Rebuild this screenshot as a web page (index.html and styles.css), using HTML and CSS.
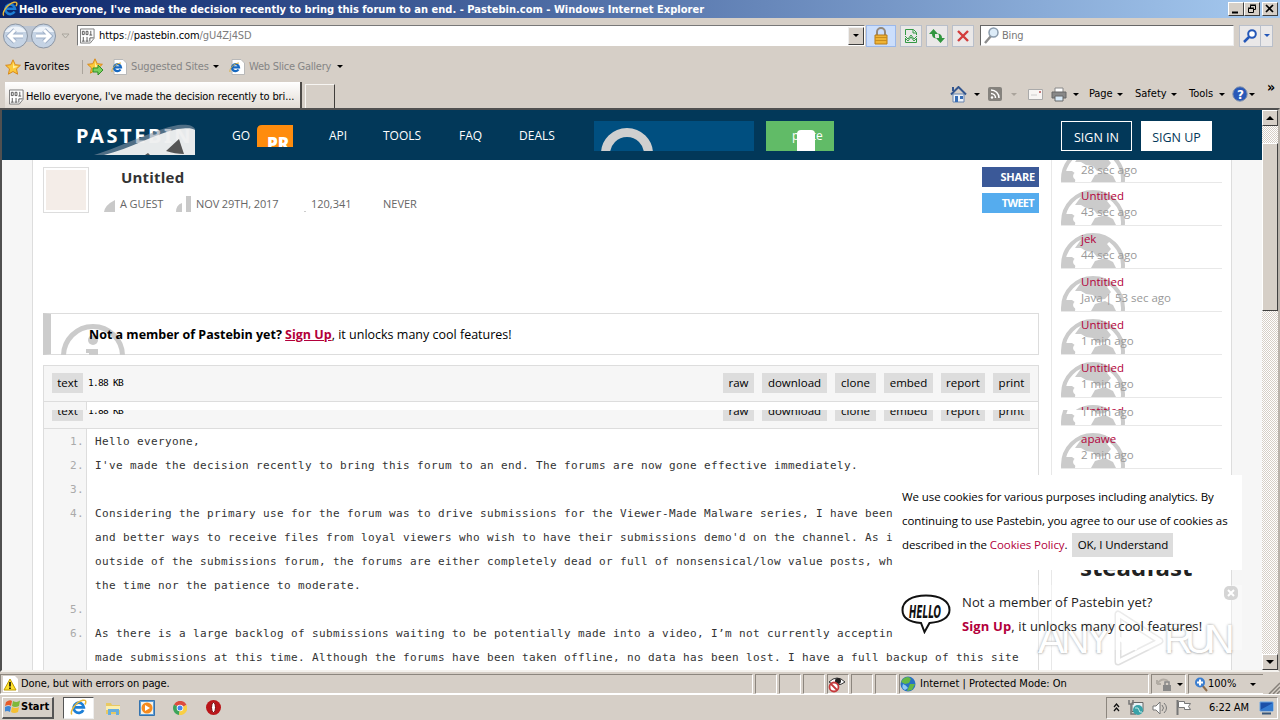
FILE: index.html
```html
<!DOCTYPE html>
<html lang="en">
<head>
    <meta charset="utf-8">
    <title>Untitled - Pastebin.com</title>
    <link rel="stylesheet" href="styles.css">
</head>
<body>
<!-- shared icons -->
<svg class="defs" width="0" height="0">
    <symbol id="ie" viewBox="0 0 16 16">
        <path d="M12.5 10.5A4.8 4.8 0 1 1 13 7.8H4" fill="none" stroke="#1d7fd6" stroke-width="2.6"/>
        <path d="M2 14.5C-1 13 5 3 12 1.2c4-.8 3 2.600 2 4" fill="none" stroke="#e9b93a" stroke-width="1.400"/>
    </symbol>
    <symbol id="iepage" viewBox="0 0 16 16">
        <path d="M3 .5h9l3.500 3.500v11.500H3z" fill="#fff" stroke="#b9b9b9"/>
        <path d="M9.500 10.500A3.500 3.500 0 1 1 10 8.300H4" fill="none" stroke="#1668c0" stroke-width="2.200"/>
        <path d="M1 13C0 10 5 4 10 4" fill="none" stroke="#d9b040"/>
    </symbol>
    <symbol id="bits" viewBox="0 0 16 16">
        <path d="M.5.500h14.500v10l-4 5H.5z" fill="#fff" stroke="#777"/>
        <path d="M2.500 3h2v3.500h-2zM6.500 3h2v3.500h-2zM11.500 2.500v4.500M10 7h3M3.500 9v4.500M2 13.500h3M7.500 9v4.500M6 13.500h3M10.500 14v-4h4" fill="none" stroke="#444" stroke-width=".9"/>
    </symbol>
    <symbol id="star" viewBox="0 0 16 16">
        <path d="M8 .8l2.200 4.900 5.200.6-3.900 3.600 1.100 5.300L8 12.500l-4.600 2.700 1.100-5.300L.6 6.300l5.200-.6z" fill="#fcc93a" stroke="#d8891c"/>
        <path d="M8 3l1 4 4 .4-5 2z" fill="#fff0a0"/>
    </symbol>
    <symbol id="globe" viewBox="0 0 64 35">
        <circle cx="32" cy="32" r="30" fill="#fff" stroke="#cbcbcb" stroke-width="4"/>
        <path d="M14 15L22 4h22l5 4-3 3 4 5-6 7-8 1-4-5-7-1-5-3zM1 35l1-11h9l4 3-1 8zM30 35l4-7 10-3 8 4 3 6z" fill="#cbcbcb"/>
        <ellipse cx="22" cy="29" rx="10" ry="6" fill="#fff"/>
    </symbol>
</svg>

<div class="titlebar">
    <svg width="16" height="16"><use href="#ie"/></svg>
    <span class="title">Hello everyone, I've made the decision recently to bring this forum to an end. - Pastebin.com - Windows Internet Explorer</span>
    <div class="winbtns">
        <i><svg width="14" height="12"><path d="M3 9.500h6" stroke="#000" stroke-width="2"/></svg></i>
        <i><svg width="14" height="12"><path d="M5.500 5V2.500h5v4H9M5 2h6M3.500 5.500h5v4h-5zM3 5h6" fill="none" stroke="#000"/></svg></i>
        <i class="close"><svg width="14" height="12"><path d="M3 2l7 7M10 2l-7 7" stroke="#000" stroke-width="1.700"/></svg></i>
    </div>
</div>

<div class="address">
    <svg class="navs" width="70" height="30" viewBox="0 0 70 30">
        <rect x="10" y="5" width="40" height="16" fill="#bcc5d2"/>
        <circle cx="14.500" cy="15" r="12" fill="#c5d3e4" stroke="#8b95a3"/>
        <circle cx="42.500" cy="15" r="12" fill="#c5d3e4" stroke="#8b95a3"/>
        <path d="M4 11a11 8 0 0 1 21 0zM32 11a11 8 0 0 1 21 0z" fill="#eef3f9"/>
        <path d="M22 15H8M14 9l-6 6 6 6M35 15h14M43 9l6 6-6 6" fill="none" stroke="#9fb0c8" stroke-width="5"/>
        <path d="M22 15H8M14 9l-6 6 6 6M35 15h14M43 9l6 6-6 6" fill="none" stroke="#fff" stroke-width="3"/>
        <path d="M61 13h7l-3.500 4z" fill="#d8d4cd" stroke="#aaa59d"/>
    </svg>
    <div class="url">
        <svg width="15" height="16"><use href="#bits"/></svg>
        <span>https<em>://</em>pastebin.com<em>/gU4Zj4SD</em></span>
        <i class="drop"><b class="arrow"></b></i>
    </div>
    <i class="tool lock"><svg width="16" height="18" viewBox="0 0 16 18"><path d="M4 9V5a4 4 0 0 1 8 0v4" fill="none" stroke="#94887a" stroke-width="2"/><path d="M2 8h12v9H2z" fill="#eeb336" stroke="#b87b15"/><path d="M2 10.500h12M2 13.500h12" stroke="#c98d1c"/></svg></i>
    <i class="tool"><svg width="14" height="16" viewBox="0 0 14 16"><path d="M1.500 7V1.500h8l3 3V7M1.500 11v3.500h11V11M9 2v3h3M1 8l3 3 3-4 3 4 3-3M1 10l3 3 3-4 3 4 3-3" fill="none" stroke="#359a45"/></svg></i>
    <i class="tool"><svg width="16" height="16" viewBox="0 0 16 16"><path d="M4.500 1L0 6h3q0 4 4 4.500Q5.500 9 6 6h3zM11.500 15L16 10h-3q0-4-4-4.500Q10.500 7 10 10H7z" fill="#31963f"/></svg></i>
    <i class="tool"><svg width="14" height="14" viewBox="0 0 14 14"><path d="M2 2l10 10M12 2L2 12" stroke="#d33d3d" stroke-width="2.400"/></svg></i>
    <div class="search">
        <svg width="16" height="17" viewBox="0 0 16 17"><path d="M7 9l-6 7" stroke="#8d8d8d" stroke-width="2.400"/><circle cx="9.500" cy="5.500" r="4.500" fill="#ddecf8" stroke="#8b9cad" stroke-width="1.500"/></svg>
        <span>Bing</span>
    </div>
    <i class="tool go"><svg width="15" height="14" viewBox="0 0 15 14"><path d="M6 8l-5 5" stroke="#2457b8" stroke-width="2.500"/><circle cx="9" cy="5" r="3.800" fill="#fff" stroke="#2457b8" stroke-width="2"/></svg></i>
    <i class="tool more"><b class="arrow blue"></b></i>
</div>

<div class="favorites">
    <svg width="16" height="16"><use href="#star"/></svg>
    <span class="favlabel">Favorites</span>
    <svg class="addfav" width="17" height="17" viewBox="0 0 17 17"><use href="#star" width="16" height="16"/><path d="M6 10h5V7l5 5-5 5v-3H6z" fill="#79d05d" stroke="#2f8e29"/></svg>
    <svg class="sug" width="16" height="16"><use href="#iepage"/></svg>
    <span class="suglabel">Suggested Sites</span><b class="arrow"></b>
    <svg class="web" width="16" height="16"><use href="#iepage"/></svg>
    <span class="weblabel">Web Slice Gallery</span><b class="arrow"></b>
</div>

<div class="tabs">
    <div class="tab"><svg width="15" height="16"><use href="#bits"/></svg><span>Hello everyone, I've made the decision recently to bri...</span></div>
    <div class="newtab"></div>
    <div class="cmds">
        <svg width="17" height="17" viewBox="0 0 17 17"><path d="M3 8h11v8H3z" fill="#edf2f9" stroke="#6885af"/><path d="M1 8.500L8.500 1 16 8.500" fill="none" stroke="#33568e" stroke-width="2"/><path d="M3 1v4" stroke="#33568e" stroke-width="2"/><path d="M5 10h3v6H5zM10 10h3v3h-3z" fill="#376db5"/></svg>
        <b class="arrow a1"></b>
        <svg class="rss" width="14" height="14" viewBox="0 0 14 14"><rect width="14" height="14" rx="2" fill="#85827d"/><path d="M3 3a8 8 0 0 1 8 8M3 6.500A4.500 4.500 0 0 1 7.500 11" fill="none" stroke="#fff" stroke-width="1.500"/><circle cx="4" cy="10.500" r="1.200" fill="#fff"/></svg>
        <b class="arrow a2 dim"></b>
        <svg class="mail" width="15" height="11" viewBox="0 0 15 11"><path d="M.5.500h14v10H.5z" fill="#f7f5f3" stroke="#aaa"/><path d="M11 2h2v2h-2z" fill="#c67b7b"/><path d="M3 6h6" stroke="#ccc"/></svg>
        <svg class="printer" width="16" height="15" viewBox="0 0 16 15"><path d="M4 1h8v5H4z" fill="#fff" stroke="#888"/><path d="M1 5h14v6H1z" fill="#888" stroke="#666"/><path d="M4 9h8v5H4z" fill="#d8eaf8" stroke="#666"/></svg>
        <b class="arrow a3"></b>
        <span class="c1">Page</span><b class="arrow"></b>
        <span class="c2">Safety</span><b class="arrow"></b>
        <span class="c3">Tools</span><b class="arrow"></b>
        <svg class="help" width="16" height="16"><circle cx="8" cy="8" r="7.200" fill="#2858b8" stroke="#8192ac"/><text x="5" y="12.500" class="q">?</text></svg>
        <b class="arrow"></b>
        <span class="raquo">»</span>
    </div>
</div>

<div class="view">
    <div class="page">
        <div class="header">
            <div class="logo">PASTEBIN
                <svg class="logopic" width="105" height="32" viewBox="0 0 105 32"><path d="M4 31C34 22 65 5 88 1c9-1 15 0 17 4v26z" fill="#8595a5" opacity=".6"/><path d="M14 31C40 25 66 9 88 5c9-1 14-1 17 1v25z" fill="#f3f3f3" opacity=".93"/><path d="M76 27l13-12 5 15c-6 0-12-1-18-3zM55 31l3-2 2 2z" fill="#555"/></svg>
            </div>
            <span class="nav n1">GO</span>
            <svg class="pro" width="36" height="22"><path d="M0 22V5q0-5 5-5h31v22z" fill="#ff8c0d"/><text x="10" y="25" class="protext">PR</text></svg>
            <span class="nav n2">API</span>
            <span class="nav n3">TOOLS</span>
            <span class="nav n4">FAQ</span>
            <span class="nav n5">DEALS</span>
            <div class="find"><svg width="60" height="23"><circle cx="33" cy="26" r="21.500" fill="none" stroke="#cfcfcf" stroke-width="9"/></svg></div>
            <div class="paste">paste<i></i></div>
            <div class="sign in">SIGN IN</div>
            <div class="sign up">SIGN UP</div>
        </div>
        <div class="content">
            <div class="main">
                <div class="info">
                    <div class="avatar"></div>
                    <div class="details">
                        <h1>Untitled</h1>
                        <div class="meta">
                            <svg width="12" height="12"><path d="M0 12Q1 5 11 0v12z" fill="#c9c9c9"/></svg>
                            <span class="m1">A GUEST</span>
                            <svg width="16" height="16"><path d="M0 16q0-7 6-9v9zM10 0h5v16h-5z" fill="#c9c9c9"/></svg>
                            <span class="m2">NOV 29TH, 2017</span>
                            <i class="dot"></i>
                            <span class="m3">120,341</span>
                            <span class="m4">NEVER</span>
                        </div>
                    </div>
                    <div class="social">
                        <div class="share">SHARE</div>
                        <div class="share tweet">TWEET</div>
                    </div>
                </div>
                <div class="notice">
                    <svg class="infoicon" width="64" height="31"><circle cx="32" cy="32" r="29.500" fill="none" stroke="#cbcbcb" stroke-width="5"/><circle cx="32" cy="16" r="5" fill="#cbcbcb"/><path d="M25 25h12v6H28v-2h-3z" fill="#cbcbcb"/></svg>
                    <span><b>Not a member of Pastebin yet?</b> <b><a>Sign Up</a></b>, it unlocks many cool features!</span>
                </div>
                <div class="code">
                    <div class="bar">
                        <span class="btn w0">text</span><span class="size">1.88 KB</span>
                        <span class="btn w1">raw</span><span class="btn w2">download</span><span class="btn w3">clone</span><span class="btn w4">embed</span><span class="btn w5">report</span><span class="btn w6">print</span>
                    </div>
                    <div class="strip"></div>
                    <div class="cut">
                        <div class="bar">
                            <span class="btn w0">text</span><span class="size">1.88 KB</span>
                            <span class="btn w1">raw</span><span class="btn w2">download</span><span class="btn w3">clone</span><span class="btn w4">embed</span><span class="btn w5">report</span><span class="btn w6">print</span>
                        </div>
                    </div>
                    <ol>
                        <li>Hello everyone,</li>
                        <li>I've made the decision recently to bring this forum to an end. The forums are now gone effective immediately.</li>
                        <li></li>
                        <li>Considering the primary use for the forum was to drive submissions for the Viewer-Made Malware series, I have been<br>and better ways to receive files from loyal viewers who wish to have their submissions demo'd on the channel. As i<br>outside of the submissions forum, the forums are either completely dead or full of nonsensical/low value posts, wh<br>the time nor the patience to moderate.</li>
                        <li></li>
                        <li>As there is a large backlog of submissions waiting to be potentially made into a video, I’m not currently acceptin<br>made submissions at this time. Although the forums have been taken offline, no data has been lost. I have a full backup of this site</li>
                    </ol>
                </div>
            </div>
            <div class="side">
                <div class="item first"><svg width="64" height="35"><use href="#globe"/></svg><p>28 sec ago</p></div>
                <div class="item"><svg width="64" height="35"><use href="#globe"/></svg><a>Untitled</a><p>43 sec ago</p></div>
                <div class="item"><svg width="64" height="35"><use href="#globe"/></svg><a>jek</a><p>44 sec ago</p></div>
                <div class="item"><svg width="64" height="35"><use href="#globe"/></svg><a>Untitled</a><p>Java | 53 sec ago</p></div>
                <div class="item"><svg width="64" height="35"><use href="#globe"/></svg><a>Untitled</a><p>1 min ago</p></div>
                <div class="item"><svg width="64" height="35"><use href="#globe"/></svg><a>Untitled</a><p>1 min ago</p></div>
                <div class="tophalf"><div class="item"><svg width="64" height="35"><use href="#globe"/></svg><a>Untitled</a></div></div>
                <div class="lowhalf"><div class="item"><svg width="64" height="35"><use href="#globe"/></svg><p>1 min ago</p></div></div>
                <div class="item"><svg width="64" height="35"><use href="#globe"/></svg><a>apawe</a><p>2 min ago</p></div>
                <div class="steadfast">steadfast</div>
            </div>
        </div>
        <div class="cookies">We use cookies for various purposes including analytics. By<br>continuing to use Pastebin, you agree to our use of cookies as<br>described in the <a>Cookies Policy</a>. <span class="ok">OK, I Understand</span></div>
        <div class="watermark">
            <span>ANY</span>
            <svg width="54" height="60" viewBox="0 0 54 60"><path d="M8 5v48L50 32z" fill="none" stroke="#ccc" stroke-width="7" stroke-linejoin="round" opacity=".6"/><path d="M8 5v48L50 32zM8 29L27 40" fill="none" stroke="#fff" stroke-width="4" stroke-linejoin="round"/></svg>
            <span class="run">RUN</span>
        </div>
        <div class="hello">
            <svg width="50" height="40" viewBox="0 0 50 40"><path d="M20 29C7 28 1.500 23 1.500 16 1.500 7 11 1.500 25 1.500S48.500 7 48.500 16c0 7-7 12-20 13l-5 9z" fill="#fff" stroke="#111" stroke-width="2"/><text x="8" y="24" textLength="32" lengthAdjust="spacingAndGlyphs" class="hellotext">HELLO</text></svg>
            <div>Not a member of Pastebin yet?<br><b>Sign Up</b>, it unlocks many cool features!</div>
            <svg class="x" width="14" height="14"><rect width="14" height="14" rx="5" fill="#d5d5d5"/><path d="M4 4l6 6M10 4l-6 6" stroke="#fff" stroke-width="2"/></svg>
        </div>
    </div>
    <div class="scroll">
        <i class="sbtn"><b class="tri up"></b></i>
        <i class="thumb"></i>
        <i class="sbtn end"><b class="tri"></b></i>
    </div>
</div>

<div class="status">
    <div class="cell msg"><svg width="17" height="16" viewBox="0 0 17 16"><path d="M1 0h12l3 3v13H1z" fill="#fff"/><path d="M8 3l6 11H2z" fill="#ffe12c" stroke="#bd9a00"/><path d="M8 6v4.500M8 11.500v1.500" stroke="#000" stroke-width="1.500"/></svg><span>Done, but with errors on page.</span></div>
    <div class="cell"></div><div class="cell"></div><div class="cell"></div>
    <div class="cell"><svg width="18" height="17" viewBox="0 0 18 17"><path d="M1 6Q9-2 17 6 9 12 1 6z" fill="#fff" stroke="#333"/><circle cx="10" cy="5" r="3" fill="#222"/><circle cx="6" cy="11" r="4.500" fill="#fff" stroke="#c5393b" stroke-width="1.800"/><path d="M3 8l6 6" stroke="#c5393b" stroke-width="1.800"/></svg></div>
    <div class="cell"></div><div class="cell"></div>
    <div class="cell zone"><svg width="16" height="16"><circle cx="8" cy="8" r="7.500" fill="#2871c4"/><path d="M3 3q5-4 8 0l-2 4-4 1-4-2zM10 8l5 0-3 6-5 1z" fill="#65b845"/><path d="M3 8q3 1 5 4l-3 2q-4-2-2-6z" fill="#8ecaf2"/></svg><span>Internet | Protected Mode: On</span></div>
    <div class="cell prot"><svg width="16" height="16"><path d="M1 8q5-7 11-3M1 8v-4M1 8h4" fill="none" stroke="#b2aca4" stroke-width="2"/><path d="M7 9h8v6H7z" fill="#888"/><path d="M9 9V6h4v3" fill="none" stroke="#888" stroke-width="1.500"/></svg><b class="arrow"></b></div>
    <div class="cell zoom"><svg width="14" height="15"><path d="M8 8l5 6" stroke="#8d6b4a" stroke-width="2"/><circle cx="6" cy="5.500" r="5" fill="#3b7ed0"/><path d="M6 2.500v6M3 5.500h6" stroke="#fff" stroke-width="2"/></svg><span>100%</span><b class="arrow"></b></div>
    <svg class="grip" width="12" height="14"><path d="M1 14L12 3M5 14l7-7M9 14l3-3" stroke="#86817a" stroke-width="1.500"/></svg>
</div>

<div class="taskbar">
    <div class="start"><svg width="16" height="16"><path d="M1 3q4-3 6-1L6 7Q4 5 0 7z" fill="#e65b28"/><path d="M8 2q4 2 7-.5L14 7q-4 2-7 0z" fill="#7eb83a"/><path d="M0 8q4-2 6 0l-1 5q-3-2-6 0z" fill="#3f86d5"/><path d="M7 8q4 2 7 0l-1 5q-4 2-7 0z" fill="#f5bf32"/></svg><b>Start</b></div>
    <div class="task"><svg width="17" height="17" viewBox="0 0 16 16"><use href="#ie"/></svg></div>
    <svg class="t1" width="16" height="16"><path d="M1 3h5l1 2h8v9H1z" fill="#e8c963"/><path d="M1 6h14v4H1z" fill="#fbefb0"/><path d="M3 9h11v6h-3v-3H6v3H3z" fill="#68aede"/></svg>
    <svg class="t2" width="16" height="16"><path d="M.5.500h15v15H.5z" fill="#5e9ed8" stroke="#3573ae"/><path d="M2 2h12v12H2z" fill="#f6f3e8"/><circle cx="8" cy="8" r="5.500" fill="#f68b1f"/><path d="M6 5v6l5-3z" fill="#fff"/></svg>
    <svg class="t2" width="14" height="14"><path d="M7 7L1 3.500A7 7 0 0 1 13.500 4z" fill="#dd4b3e"/><path d="M7 7L1 3.500A7 7 0 0 0 6 14z" fill="#3da45a"/><path d="M7 7l6.500-3A7 7 0 0 1 6 14z" fill="#f9cf45"/><circle cx="7" cy="7" r="3.300" fill="#fff"/><circle cx="7" cy="7" r="2.500" fill="#4486ee"/></svg>
    <svg class="t3" width="15" height="15"><circle cx="7.500" cy="7.500" r="7.500" fill="#ba1519"/><ellipse cx="7.500" cy="7.500" rx="2" ry="5" fill="#fff" stroke="#730508"/></svg>
    <div class="tray">
        <svg class="chev" width="7" height="9"><path d="M1 4l2.500-3L6 4M1 8l2.500-3L6 8" fill="none" stroke="#111" stroke-width="1.300"/></svg>
        <svg class="net" width="16" height="16"><path d="M4 2.500h11v9H4z" fill="#e8f2f6" stroke="#666"/><path d="M1 0v4h4V0M3 4v10h5" fill="none" stroke="#777" stroke-width="1.500"/><circle cx="10" cy="10" r="5" fill="#39a2a8"/><path d="M7 8q4-1 4 2t3 2" fill="none" stroke="#c6ebe8"/></svg>
        <svg class="vol" width="17" height="14"><path d="M1 5h3l4-4v12L4 9H1z" fill="#fff" stroke="#777"/><path d="M10 4q3 3 0 6M12 2q5 5 0 10" fill="none" stroke="#777"/></svg>
        <svg class="flag" width="16" height="15"><path d="M1.500 0v15" stroke="#777" stroke-width="2"/><path d="M2.500 1.500h6v2h6l-2 3 2 3h-6v-2h-6z" fill="#fff" stroke="#777"/></svg>
        <span>6:22 AM</span>
        <svg class="desk" width="15" height="14"><path d="M1 1h13v9H1z" fill="#1c50a8" stroke="#6ca7e3"/><path d="M1 9L14 2v8z" fill="#347bd0"/><path d="M3 12.500h9" stroke="#395779" stroke-width="2"/></svg>
    </div>
</div>
</body>
</html>
```
FILE: styles.css
```css
* {
    box-sizing: border-box;
}
body {
    margin: 0;
    width: 1280px;
    height: 720px;
    overflow: hidden;
    display: flex;
    flex-direction: column;
    background: #d6cfc7;
    color: #000;
    font: 11px/14px "DejaVu Sans Condensed", "DejaVu Sans", sans-serif;
    white-space: nowrap;
}
i, em {
    font-style: normal;
}
p, h1, ol {
    margin: 0;
    padding: 0;
}
svg {
    display: block;
    flex: none;
}
.defs {
    position: absolute;
}
.arrow {
    flex: none;
    width: 0;
    height: 0;
    border: 3px solid transparent;
    border-top-color: #000;
    border-bottom: 0;
}
.arrow.dim {
    border-top-color: #aaa49c;
}
.arrow.blue {
    border-top-color: #2457b8;
}

/* window title */
.titlebar {
    height: 18px;
    flex: none;
    display: flex;
    align-items: center;
    padding: 0 2px;
    background: linear-gradient(90deg, #0a246a, #a6caf0);
    color: #fff;
    font-weight: bold;
}
.title {
    padding: 1px 0 0 1px;
    letter-spacing: 0.025px;
}
.winbtns {
    display: flex;
    margin-left: auto;
}
.winbtns i {
    width: 16px;
    height: 14px;
    background: #d6cfc7;
    border: 1px solid #fff;
    border-right-color: #404040;
    border-bottom-color: #404040;
}
.winbtns .close {
    margin-left: 2px;
}

/* address row */
.address {
    height: 35px;
    flex: none;
    display: flex;
    align-items: center;
    padding-left: 1px;
}
.url {
    margin-left: 6px;
    width: 788px;
    height: 21px;
    display: flex;
    align-items: center;
    padding-left: 2px;
    background: #fff;
    border: 1px solid #777;
    border-right-color: #fff;
    border-bottom-color: #fff;
}
.url span {
    margin-left: 4px;
    letter-spacing: -0.1px;
}
.url em {
    color: #7d7d7d;
}
.url .drop {
    margin-left: auto;
    width: 16px;
    height: 18px;
    display: flex;
    align-items: center;
    justify-content: center;
    background: #d6cfc7;
    border: 1px solid #eee;
    border-right-color: #404040;
    border-bottom-color: #404040;
}
.tool {
    width: 22px;
    height: 22px;
    margin-left: 4px;
    display: flex;
    align-items: center;
    justify-content: center;
    background: #eae8e8;
    border: 1px solid #b9bfca;
}
.tool.lock {
    width: 30px;
    margin-left: 1px;
    background: #cbdefc;
    border-color: #9bb8ea;
}
.search {
    width: 254px;
    height: 21px;
    margin: 0 5px 0 6px;
    display: flex;
    align-items: center;
    padding-left: 3px;
    background: #fff;
    border: 1px solid #666;
    border-right-color: #eee;
    border-bottom-color: #eee;
    color: #777;
}
.search span {
    margin-left: 2px;
    letter-spacing: -0.2px;
}
.tool.go {
    margin: 0;
}
.tool.more {
    width: 13px;
    margin-left: -1px;
}

/* favorites row */
.favorites {
    height: 27px;
    flex: none;
    display: flex;
    align-items: center;
    padding-left: 5px;
    color: #858585;
}
.favlabel {
    width: 59px;
    margin-left: 3px;
    padding-right: 12px;
    color: #000;
    border-right: 1px solid #aaa49c;
    letter-spacing: 0.1px;
}
.addfav {
    margin-left: 4px;
}
.sug {
    margin-left: 7px;
}
.suglabel {
    width: 82px;
    margin-left: 4px;
    letter-spacing: -0.15px;
}
.web {
    margin-left: 10px;
}
.weblabel {
    width: 86px;
    margin: 0 2px 0 4px;
    letter-spacing: -0.25px;
}

/* tabs row */
.tabs {
    height: 28px;
    flex: none;
    display: flex;
    align-items: flex-end;
    padding-left: 5px;
}
.tab {
    width: 297px;
    height: 26px;
    display: flex;
    align-items: center;
    padding: 3px 0 0 4px;
    background: linear-gradient(#fff, #e2dcd5);
    border-right: 2px solid #4d4a47;
}
.tab span {
    margin-left: 2px;
    letter-spacing: -0.12px;
}
.newtab {
    width: 30px;
    height: 24px;
    margin-left: 3px;
    border: 1px solid #f7f5f2;
    border-right: 1px solid #403e3b;
    border-bottom: 0;
}
.cmds {
    height: 28px;
    margin-left: 615px;
    display: flex;
    align-items: center;
}
.a1 { margin: 0 8px 0 7px; }
.a2 { margin: 0 11px 0 9px; }
.mail { margin-right: 8px; }
.a3 { margin: 0 11px 0 6px; }
.c1 { width: 28px; letter-spacing: -0.1px; margin-left: -1px; }
.c2 { width: 36px; margin-left: 12px; }
.c3 { width: 30px; margin-left: 12px; }
.help { margin: 0 1px 0 7px; }
.q {
    font: bold 12px "DejaVu Sans", sans-serif;
    fill: #fff;
}
.raquo {
    margin: -14px 0 0 12px;
    font-size: 14px;
    font-weight: bold;
}

/* viewport */
.view {
    height: 564px;
    flex: none;
    display: flex;
    border: 2px solid #505050;
    border-right-color: #b8b2aa;
    border-bottom: 2px solid #f4f2ee;
}
.page {
    position: relative;
    width: 1260px;
    overflow: hidden;
    background: #f6f6f6;
    font: 12px/16px "Open Sans", "Noto Sans", sans-serif;
}
.header {
    height: 50px;
    display: flex;
    align-items: flex-start;
    padding: 11px 0 0 74px;
    background: #023859;
    color: #fff;
}
.logo {
    position: relative;
    width: 156px;
    padding-top: 2px;
    font: bold 20px/26px "Noto Sans", sans-serif;
    letter-spacing: 2.6px;
}
.logopic {
    position: absolute;
    left: 14px;
    top: 3px;
}
.nav {
    padding-top: 7px;
}
.n1 { width: 25px; }
.n2 { width: 54px; margin-left: 36px; }
.n3 { width: 76px; }
.n4 { width: 60px; }
.n5 { width: 75px; }
.pro {
    margin-top: 4px;
}
.protext {
    font: 900 17px "Open Sans", sans-serif;
    fill: #fff;
}
.find {
    width: 160px;
    height: 30px;
    padding-top: 7px;
    overflow: hidden;
    background: #004f80;
}
.paste {
    position: relative;
    width: 68px;
    height: 30px;
    margin-left: 12px;
    padding: 7px 0 0 26px;
    background: #61bb67;
}
.paste i {
    position: absolute;
    left: 31px;
    top: 9px;
    width: 18px;
    height: 21px;
    border-radius: 4px 4px 0 0;
    background: #fff;
}
.sign {
    width: 71px;
    height: 30px;
    border: 1px solid #fff;
    font-size: 12.5px;
    line-height: 31px;
    text-align: center;
}
.sign.in {
    margin: 0 9px 0 227px;
}
.sign.up {
    background: #fff;
    color: #023859;
}
.content {
    height: 510px;
    width: 1200px;
    margin-left: 30px;
    display: flex;
    background: #fff;
    border: 1px solid #ddd;
    border-width: 0 1px;
}
.main {
    width: 996px;
    margin-left: 10px;
    padding-top: 7px;
}
.info {
    height: 146px;
    display: flex;
}
.avatar {
    width: 46px;
    height: 46px;
    padding: 2px;
    border: 1px solid #ddd;
    background: #f4ede8 content-box;
}
.details {
    width: 879px;
    margin-left: 14px;
}
h1 {
    padding-left: 18px;
    font: bold 15px/21px "Open Sans", sans-serif;
    letter-spacing: .2px;
    color: #333;
}
.meta {
    height: 24px;
    display: flex;
    align-items: flex-end;
    padding-left: 1px;
    color: #666;
    font-size: 11px;
}
.meta span {
    align-self: center;
    padding-top: 7px;
}
.m1 { width: 56px; margin-left: 4px; letter-spacing: -0.1px; }
.m2 { width: 108px; margin-left: 4px; letter-spacing: -0.1px; }
.dot {
    width: 2px;
    height: 1px;
    background: #ccc;
}
.m3 { width: 72px; margin-left: 5px; }
.share {
    width: 57px;
    height: 20px;
    margin-bottom: 6px;
    padding-right: 4px;
    background: #3b5998;
    color: #fff;
    font: bold 11px/20px "Open Sans", sans-serif;
    letter-spacing: -0.2px;
    text-align: right;
}
.tweet {
    background: #55acee;
    padding-right: 5px;
    letter-spacing: -0.7px;
}
.notice {
    position: relative;
    height: 42px;
    padding: 13px 0 0 38px;
    border: 1px solid #ddd;
    border-left: 8px solid #ccc;
    font-size: 12.5px;
}
.notice span {
    position: relative;
}
.infoicon {
    position: absolute;
    left: 10px;
    top: 10px;
}
a {
    color: #b3003b;
}
.notice a {
    text-decoration: underline;
}
.code {
    height: 320px;
    margin-top: 10px;
    border: 1px solid #ddd;
    overflow: hidden;
}
.bar {
    height: 36px;
    flex: none;
    display: flex;
    align-items: center;
    padding: 0 8px 1px;
    background: #f6f6f6;
    border-bottom: 1px solid #ddd;
}
.btn {
    height: 20px;
    background: #ddd;
    font-size: 11.5px;
    line-height: 19px;
    text-align: center;
}
.size {
    margin-left: 5px;
    font: 9.500px/16px "DejaVu Sans Mono", monospace;
    letter-spacing: -0.7px;
}
.w0 { width: 31px; }
.w1 { width: 31px; margin-left: auto; }
.w2 { width: 65px; margin-left: 8px; }
.w3 { width: 41px; margin-left: 8px; }
.w4 { width: 49px; margin-left: 8px; }
.w5 { width: 44px; margin-left: 8px; }
.w6 { width: 37px; margin-left: 8px; }
.strip {
    width: 43px;
    height: 8px;
    background: #f6f6f6;
    border-right: 1px solid #ddd;
}
.cut {
    height: 19px;
    display: flex;
    flex-direction: column;
    justify-content: flex-end;
    overflow: hidden;
}
.cut .bar {
    padding: 1px 8px 0;
}
ol {
    padding: 1px 0 0 51px;
    color: #333;
    background: linear-gradient(90deg, #f6f6f6 42px, #ddd 42px, #ddd 43px, #fff 43px);
    font: 11px/24px "DejaVu Sans Mono", monospace;
    letter-spacing: .378px;
    counter-reset: line;
    list-style: none;
}
li {
    min-height: 24px;
    counter-increment: line;
}
li::before {
    content: counter(line) ".";
    float: left;
    width: 20px;
    margin-left: -25px;
    color: #aaa;
}
.side {
    width: 180px;
    margin-left: 12px;
    padding-left: 9px;
    border-left: 1px solid #e8e8e8;
}
.item {
    position: relative;
    height: 43px;
    width: 161px;
    flex: none;
    padding: 5px 0 0 20px;
    border-bottom: 1px solid #e8e8e8;
    font-size: 11.5px;
}
.item svg {
    position: absolute;
    left: 0;
    bottom: 0;
}
.item a, .item p {
    position: relative;
    display: block;
}
.item p {
    color: #999;
}
.item.first {
    height: 23px;
    padding-top: 2px;
    overflow: hidden;
}
.tophalf {
    height: 12px;
    overflow: hidden;
}
.lowhalf {
    height: 16px;
    display: flex;
    flex-direction: column;
    justify-content: flex-end;
    overflow: hidden;
}
.lowhalf p {
    padding-top: 16px;
}
.steadfast {
    margin: 85px 0 0 19px;
    font: bold 24px/26px "Open Sans", sans-serif;
    color: #222;
    letter-spacing: 0;
}

/* popups over the page */
.cookies {
    position: absolute;
    left: 891px;
    top: 365px;
    width: 349px;
    height: 95px;
    padding: 10px 9px;
    background: #fff;
    line-height: 24px;
    font-size: 11.5px;
    letter-spacing: -0.08px;
}
.ok {
    display: inline-block;
    width: 101px;
    margin-left: 2px;
    text-align: center;
    background: #ddd;
}
.hello {
    position: absolute;
    left: 891px;
    top: 475px;
    width: 349px;
    height: 65px;
    padding: 5px 8px;
    display: flex;
    background: rgba(255, 255, 255, .35);
    color: #222;
    font-size: 13px;
    line-height: 24px;
    letter-spacing: 0.12px;
}
.hello > svg {
    margin-top: 4px;
}
.hello div {
    margin-left: 11px;
}
.hello b {
    color: #b3003b;
}
.hello .x {
    position: absolute;
    right: 4px;
    top: -3px;
}
.hellotext {
    font: bold italic 18px "DejaVu Sans Condensed", sans-serif;
    fill: #111;
}
.watermark {
    position: absolute;
    left: 1036px;
    top: 498px;
    width: 200px;
    height: 62px;
    display: flex;
    align-items: center;
    color: #fff;
    font: 40px/62px "Liberation Sans", sans-serif;
    text-shadow: 0 0 3px #999, 0 0 2px #bbb;
}
.watermark span {
    width: 72px;
    letter-spacing: -4px;
}
.watermark .run {
    letter-spacing: -8px;
}

/* scrollbar */
.scroll {
    width: 16px;
    display: flex;
    flex-direction: column;
    background: repeating-conic-gradient(#fff 0 25%, #d6cfc7 0 50%) 0 0 / 2px 2px;
}
.sbtn, .thumb {
    flex: none;
    height: 16px;
    display: flex;
    align-items: center;
    justify-content: center;
    background: #d6cfc7;
    border: 1px solid #fff;
    border-right-color: #404040;
    border-bottom-color: #404040;
}
.thumb {
    height: 168px;
    margin-top: 17px;
}
.sbtn.end {
    margin-top: auto;
}
.tri {
    border: 4px solid transparent;
    border-top-color: #000;
    border-bottom: 0;
}
.tri.up {
    border-top: 0;
    border-bottom: 4px solid #000;
}

/* status bar */
.status {
    height: 23px;
    flex: none;
    display: flex;
    gap: 2px;
    padding: 2px 0 0;
    border-bottom: 1px solid #fff;
}
.cell {
    width: 22px;
    display: flex;
    align-items: center;
    border: 1px solid #8c867e;
    border-right-color: #fff;
    border-bottom-color: #fff;
}
.msg {
    width: 753px;
    padding-left: 1px;
    gap: 2px;
    letter-spacing: -0.1px;
}
.zone {
    width: 250px;
    gap: 4px;
}
.prot {
    width: 35px;
    gap: 5px;
    padding-left: 4px;
}
.zoom {
    width: 75px;
    padding-left: 5px;
    border-right: 0;
}
.zoom span {
    margin: 0 14px 0 0;
}
.grip {
    align-self: flex-end;
    margin-left: 3px;
}

/* taskbar */
.taskbar {
    height: 25px;
    flex: none;
    display: flex;
    align-items: center;
    padding: 0 0 0 2px;
}
.start {
    width: 52px;
    height: 22px;
    display: flex;
    align-items: center;
    padding-left: 2px;
    background: #d6cfc7;
    border: 1px solid #fff;
    border-right: 2px solid #555;
    border-bottom: 2px solid #555;
}
.task {
    width: 31px;
    height: 22px;
    margin-left: 9px;
    display: flex;
    align-items: center;
    justify-content: center;
    background: #fff;
    border: 1px solid #555;
    border-right-color: #eee;
    border-bottom-color: #eee;
}
.t1 { margin-left: 11px; }
.t2 { margin-left: 18px; }
.t3 { margin-left: 19px; }
.tray {
    width: 172px;
    height: 22px;
    margin: 0 2px 0 auto;
    display: flex;
    align-items: center;
    padding-left: 6px;
    border: 1px solid #8c867e;
    border-right-color: #fff;
    border-bottom-color: #fff;
}
.net { margin-left: 8px; }
.vol { margin-left: 8px; }
.flag { margin-left: 7px; }
.tray span {
    width: 44px;
    margin-left: 17px;
    letter-spacing: -0.1px;
}
.desk { margin-left: 6px; }
```
